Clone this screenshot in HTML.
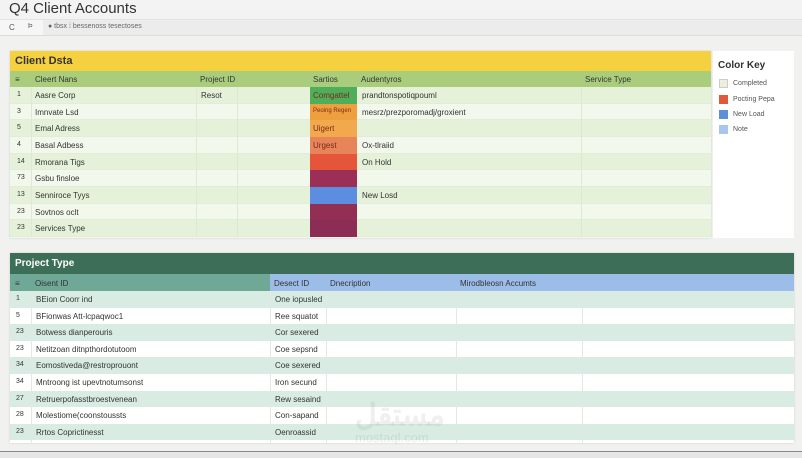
<!DOCTYPE html><html><head><style>
*{margin:0;padding:0;box-sizing:border-box}
body{width:802px;height:458px;background:#f1f1f0;font-family:"Liberation Sans",sans-serif;position:relative;overflow:hidden;color:#333}
.a{position:absolute}
.t{font-size:8px;white-space:nowrap}
</style></head><body>
<div class="a" style="left:0;top:0;width:802px;height:19px;background:#f3f3f3"></div>
<div class="a" style="left:9px;top:0px;font-size:15px;color:#333">Q4 Client Accounts</div>
<div class="a" style="left:0;top:19px;width:802px;height:17px;background:#f6f6f6;border-top:1px solid #e2e2e2;border-bottom:1px solid #ddd"></div>
<div class="a t" style="left:9px;top:23px;color:#555">C</div>
<div class="a t" style="left:28px;top:23px;color:#555;font-size:7px">Þ</div>
<div class="a" style="left:43px;top:20px;width:760px;height:15px;background:#ececec"></div>
<div class="a t" style="left:48px;top:23px;color:#666;font-size:7px">● tbsx  ⁞  bessenoss tesectoses</div>
<div class="a" style="left:10px;top:51px;width:701px;height:187px;background:#f3f8ec;box-shadow:0 0 2px #ccc"></div>
<div class="a" style="left:10px;top:51px;width:701px;height:20px;background:#f5d13f"></div>
<div class="a" style="left:15px;top:55px;font-size:11px;font-weight:bold;color:#333">Client Dsta</div>
<div class="a" style="left:10px;top:71px;width:701px;height:16px;background:#aacd7c"></div>
<div id="cl"></div>
<div class="a" style="left:713px;top:51px;width:81px;height:187px;background:#fff"></div>
<div class="a" style="left:718px;top:60px;font-size:10px;font-weight:bold;color:#333">Color Key</div>
<div class="a" style="left:719px;top:79px;width:9px;height:9px;background:#eeeedd;border:1px solid #ccc"></div>
<div class="a t" style="left:733px;top:80px;color:#555;font-size:7px">Completed</div>
<div class="a" style="left:719px;top:95px;width:9px;height:9px;background:#e05a3a"></div>
<div class="a t" style="left:733px;top:96px;color:#555;font-size:7px">Pocting Pepa</div>
<div class="a" style="left:719px;top:110px;width:9px;height:9px;background:#5b8fd6"></div>
<div class="a t" style="left:733px;top:111px;color:#555;font-size:7px">New Load</div>
<div class="a" style="left:719px;top:125px;width:9px;height:9px;background:#a9c6ec"></div>
<div class="a t" style="left:733px;top:126px;color:#555;font-size:7px">Note</div>
<div class="a" style="left:10px;top:253px;width:784px;height:190px;background:#fff;box-shadow:0 0 2px #ccc"></div>
<div class="a" style="left:10px;top:253px;width:784px;height:21px;background:#3d6e58"></div>
<div class="a" style="left:15px;top:258px;font-size:10px;font-weight:bold;color:#fff">Project Type</div>
<div class="a" style="left:10px;top:274px;width:260px;height:17px;background:#6fa896"></div>
<div class="a" style="left:270px;top:274px;width:524px;height:17px;background:#9dbde9"></div>
<div id="pl"></div>
<div class="a" style="left:0;top:451px;width:802px;height:7px;background:#e6e6e6;border-top:1px solid #888"></div>
<div class="a" style="left:355px;top:398px;font-size:30px;font-weight:bold;color:rgba(150,150,150,.15)">مستقل</div>
<div class="a" style="left:355px;top:430px;font-size:13px;color:rgba(150,150,150,.2)">mostaql.com</div>
<script>
var h='';
var cols=[31,196,237,310,357,581,711];
var hd=[['≡',15],['Cleert Nans',35],['Project ID',200],['Sartios',313],['Audentyros',361],['Service Type',585]];
hd.forEach(function(c){h+='<div class="a t" style="left:'+c[1]+'px;top:75px;color:#333">'+c[0]+'</div>'});
var rows=[['1','Aasre Corp','Resot','Comgattel','#4fae5a','prandtonspotiqpouml'],['3','Imnvate Lsd','','Peoing Regen','#ef9f3e','mesrz/prezporomadj/groxient'],['5','Emal Adress','','Uigert','#f2a94e',''],['4','Basal Adbess','','Urgest','#e8845a','Ox-tlraiid'],['14','Rmorana Tigs','','','#e4553a','On Hold'],['73','Gsbu finsloe','','','#9b2f55',''],['13','Senniroce Tyys','','','#5b8ee0','New Losd'],['23','Sovtnos oclt','','','#932f55',''],['23','Services Type','','','#8c2d55','']];
rows.forEach(function(r,i){var y=87+i*16.67;
h+='<div class="a" style="left:10px;top:'+y+'px;width:701px;height:16.67px;background:'+(i%2?'#f3f8ec':'#e6f1d9')+';border-bottom:1px solid #e3ecd8"></div>';
h+='<div class="a" style="left:310px;top:'+y+'px;width:47px;height:16.67px;background:'+r[4]+'"></div>';
h+='<div class="a t" style="left:17px;top:'+(y+4)+'px;font-size:7px">'+r[0]+'</div>';
h+='<div class="a t" style="left:35px;top:'+(y+4)+'px">'+r[1]+'</div>';
h+='<div class="a t" style="left:201px;top:'+(y+4)+'px">'+r[2]+'</div>';
h+='<div class="a t" style="left:313px;top:'+(y+4)+'px;font-size:'+(r[3].length>10?6:8)+'px;color:#7a2a1a">'+r[3]+'</div>';
h+='<div class="a t" style="left:362px;top:'+(y+4)+'px">'+r[5]+'</div>';});
cols.slice(0,6).forEach(function(x){if(x!=310&&x!=357)h+='<div class="a" style="left:'+x+'px;top:87px;width:1px;height:150px;background:#dfe8d3"></div>'});
document.getElementById('cl').outerHTML=h;
var p='';
[['≡',15],['Oisent ID',35],['Desect ID',274],['Dnecription',330],['Mirodbleosn Accumts',460]].forEach(function(c){p+='<div class="a t" style="left:'+c[1]+'px;top:279px;color:#333">'+c[0]+'</div>'});
var pr=[['1','BEion Coorr ind','One iopusled'],['5','BFionwas Att-lcpaqwoc1','Ree squatot'],['23','Botwess dianperouris','Cor sexered'],['23','Netitzoan ditnpthordotutoom','Coe sepsnd'],['34','Eomostiveda@restroprouont','Coe sexered'],['34','Mntroong ist upevtnotumsonst','Iron secund'],['27','Retruerpofasstbroestvenean','Rew sesaind'],['28','Molestiome(coonstoussts','Con-sapand'],['23','Rrtos Coprictinesst','Oenroassid']];
pr.forEach(function(r,i){var y=291+i*16.6;
p+='<div class="a" style="left:10px;top:'+y+'px;width:784px;height:16.6px;background:'+(i%2?'#fff':'#d8ece3')+'"></div>';
p+='<div class="a t" style="left:16px;top:'+(y+4)+'px;font-size:7px">'+r[0]+'</div>';
p+='<div class="a t" style="left:36px;top:'+(y+4)+'px">'+r[1]+'</div>';
p+='<div class="a t" style="left:275px;top:'+(y+4)+'px">'+r[2]+'</div>';});
[31,270,326,456,582].forEach(function(x){p+='<div class="a" style="left:'+x+'px;top:291px;width:1px;height:152px;background:#e2e8e5"></div>'});
document.getElementById('pl').outerHTML=p;
</script>
</body></html>
